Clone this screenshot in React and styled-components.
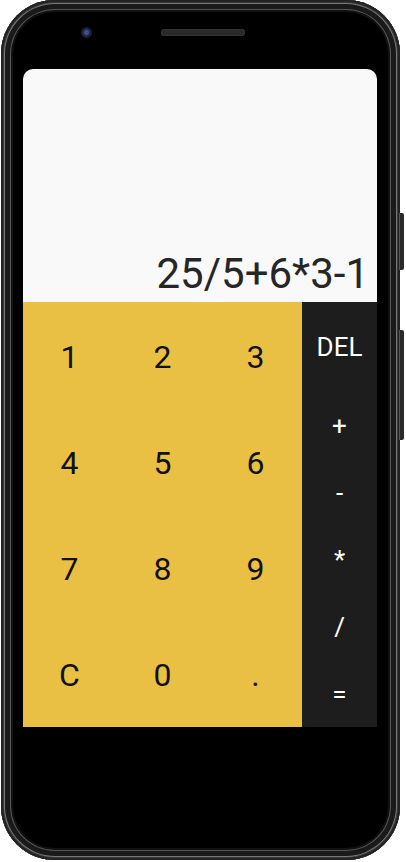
import React from "react";
import styled, { createGlobalStyle } from "styled-components";

const Global = createGlobalStyle`
  html, body { margin: 0; padding: 0; background: #ffffff; }
  body { font-family: Roboto, "Liberation Sans", sans-serif; }
  * { box-sizing: border-box; }
`;

const Phone = styled.div`
  position: relative;
  margin-left: 1px;
  width: 399px;
  height: 860px;
  border-radius: 54px;
  background: #000;
  padding: 0 23px 0 22px;
  display: flex;
  flex-direction: column;
  box-shadow:
    inset 0 0 0 2px #222,
    inset 0 0 0 3px #3a3a3a,
    inset 0 0 0 4px #777,
    inset 0 0 0 9px #1a1a1a,
    inset 0 0 0 10px #555,
    inset 0 0 0 12px #111;
`;

const SideButton = styled.div`
  position: absolute;
  right: -4px;
  top: ${(p) => p.$top}px;
  width: 5px;
  height: ${(p) => p.$h}px;
  border-radius: 0 2px 2px 0;
  background: #2a2a2a;
  border-left: 1px solid #555;
`;

const TopBar = styled.div`
  height: 69px;
  display: flex;
  align-items: flex-start;
  padding-top: 27px;
  padding-left: 58px;
  gap: 69px;
`;

const Camera = styled.div`
  width: 11px;
  height: 11px;
  border-radius: 50%;
  background: radial-gradient(circle at 50% 50%, #3b4f8a 0 25%, #1c2440 45%, #1a1a1e 75%);
`;

const Speaker = styled.div`
  margin-top: 2px;
  width: 84px;
  height: 7px;
  border-radius: 4px;
  background: #2a2a2a;
  box-shadow: inset 0 0 0 1px #333;
`;

const Screen = styled.div`
  width: 354px;
  display: flex;
  flex-direction: column;
  border-radius: 10px 10px 0 0;
  overflow: hidden;
`;

const Display = styled.div`
  height: 233px;
  background: #f9f9f9;
  display: flex;
  flex-direction: column;
  justify-content: flex-end;
  align-items: flex-end;
  padding: 0 8px 4px 0;
`;

const Expression = styled.div`
  font-family: Roboto, "Liberation Sans", sans-serif;
  font-size: 42px;
  color: #262626;
  line-height: normal;
  white-space: nowrap;
`;

const Keypad = styled.div`
  display: flex;
  height: 425px;
`;

const Digits = styled.div`
  width: 279px;
  background: #eac044;
  display: grid;
  grid-template-columns: repeat(3, 1fr);
  grid-template-rows: repeat(4, 1fr);
`;

const DigitKey = styled.div`
  display: flex;
  align-items: center;
  justify-content: center;
  font-size: 32px;
  color: #111;
  padding-top: 3px;
`;

const Operators = styled.div`
  width: 75px;
  background: #1d1d1d;
  display: flex;
  flex-direction: column;
`;

const OpKey = styled.div`
  height: ${(p) => p.$h}px;
  display: flex;
  align-items: center;
  justify-content: center;
  font-size: 26px;
  color: #fff;
`;

const digits = ["1", "2", "3", "4", "5", "6", "7", "8", "9", "C", "0", "."];
const ops = [
  { t: "DEL", h: 90 },
  { t: "+", h: 67 },
  { t: "-", h: 67 },
  { t: "*", h: 67 },
  { t: "/", h: 67 },
  { t: "=", h: 67 },
];

export default function App() {
  return (
    <>
      <Global />
      <Phone>
        <SideButton $top={213} $h={57} />
        <SideButton $top={330} $h={110} />
        <TopBar>
          <Camera />
          <Speaker />
        </TopBar>
        <Screen>
          <Display>
            <Expression>25/5+6*3-1</Expression>
          </Display>
          <Keypad>
            <Digits>
              {digits.map((d) => (
                <DigitKey key={d}>{d}</DigitKey>
              ))}
            </Digits>
            <Operators>
              {ops.map((o) => (
                <OpKey key={o.t} $h={o.h}>
                  {o.t}
                </OpKey>
              ))}
            </Operators>
          </Keypad>
        </Screen>
      </Phone>
    </>
  );
}
